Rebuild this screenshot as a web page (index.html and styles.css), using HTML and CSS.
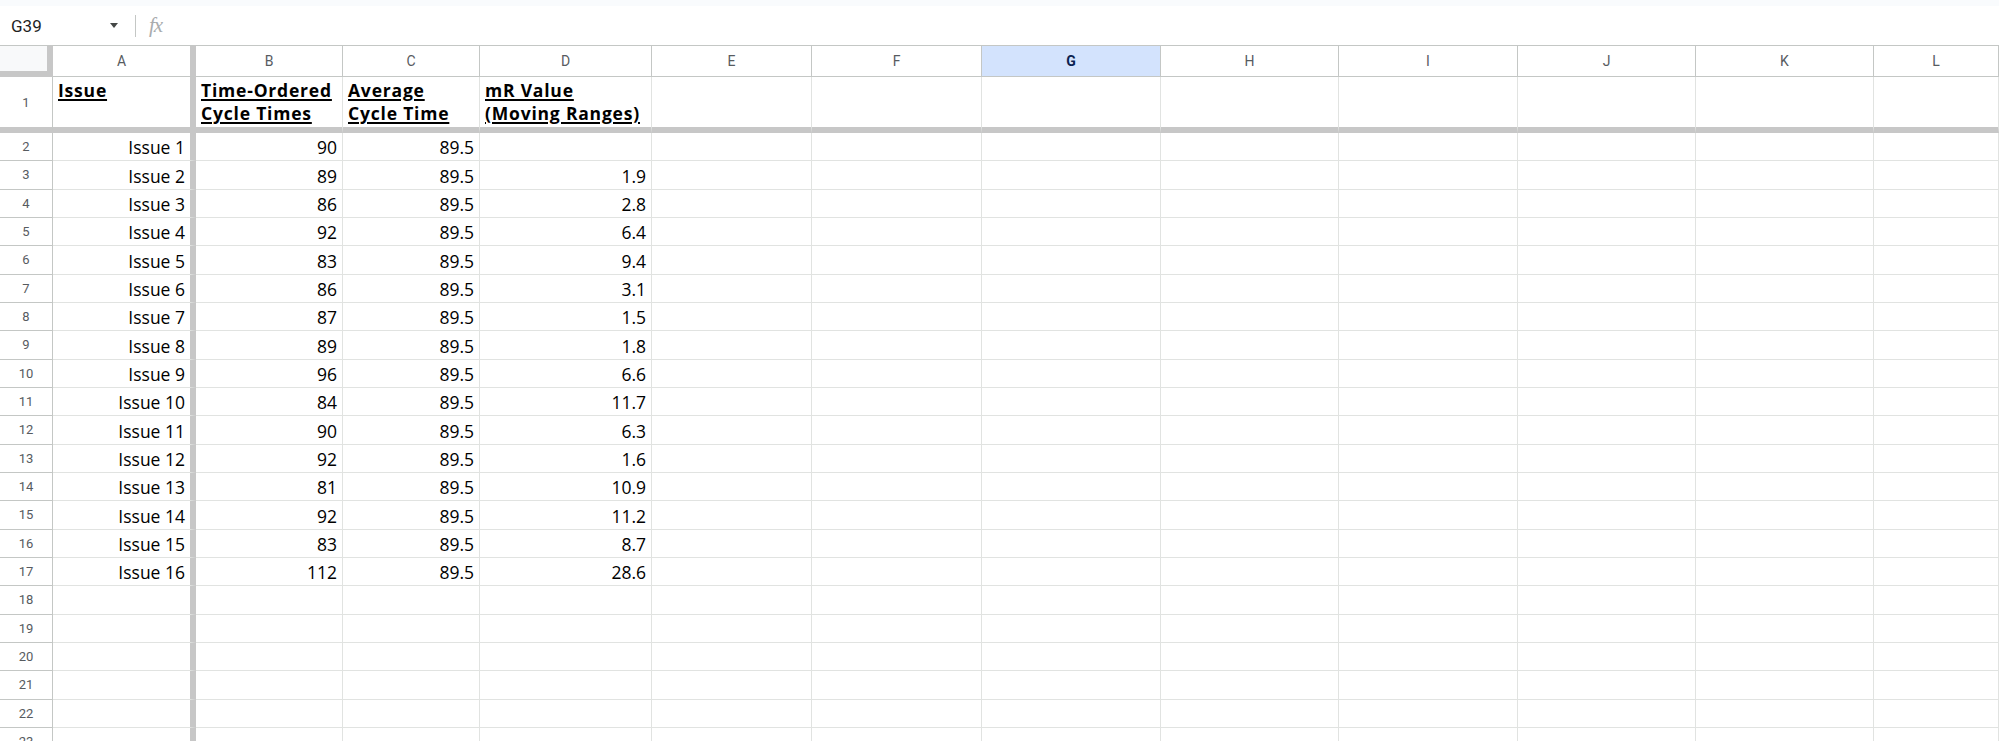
FILE: index.html
```html
<!DOCTYPE html>
<html lang="en">
<head>
    <meta charset="UTF-8">
    <meta name="viewport" content="width=device-width, initial-scale=1.0">
    <title>Cycle Times</title>
    <link rel="stylesheet" href="styles.css">
</head>
<body>
    <div class="topstrip"></div>
    <div class="formula-bar">
      <div class="name-box">G39</div>
      <span class="caret"></span>
      <span class="divider"></span>
      <span class="fx">fx</span>
    </div>

    <div class="sheet">
      <div class="row head-row">
        <div class="corner"></div>
        <div class="ch a">A</div>
        <div class="ch">B</div>
        <div class="ch">C</div>
        <div class="ch">D</div>
        <div class="ch">E</div>
        <div class="ch">F</div>
        <div class="ch sel">G</div>
        <div class="ch">H</div>
        <div class="ch">I</div>
        <div class="ch">J</div>
        <div class="ch">K</div>
        <div class="ch">L</div>
      </div>

      <div class="row row1">
        <div class="rh">1</div>
        <div class="c a hd"><span>Issue</span></div>
        <div class="c hd"><span>Time-Ordered<br>Cycle Times</span></div>
        <div class="c hd"><span>Average<br>Cycle Time</span></div>
        <div class="c hd"><span>mR Value<br>(Moving Ranges)</span></div>
        <div class="c"></div><div class="c"></div><div class="c"></div><div class="c"></div>
        <div class="c"></div><div class="c"></div><div class="c"></div><div class="c"></div>
      </div>

      <div class="row">
        <div class="rh">2</div>
        <div class="c a">Issue 1</div><div class="c">90</div><div class="c">89.5</div><div class="c"></div>
        <div class="c"></div><div class="c"></div><div class="c"></div><div class="c"></div>
        <div class="c"></div><div class="c"></div><div class="c"></div><div class="c"></div>
      </div>
      <div class="row">
        <div class="rh">3</div>
        <div class="c a">Issue 2</div><div class="c">89</div><div class="c">89.5</div><div class="c">1.9</div>
        <div class="c"></div><div class="c"></div><div class="c"></div><div class="c"></div>
        <div class="c"></div><div class="c"></div><div class="c"></div><div class="c"></div>
      </div>
      <div class="row">
        <div class="rh">4</div>
        <div class="c a">Issue 3</div><div class="c">86</div><div class="c">89.5</div><div class="c">2.8</div>
        <div class="c"></div><div class="c"></div><div class="c"></div><div class="c"></div>
        <div class="c"></div><div class="c"></div><div class="c"></div><div class="c"></div>
      </div>
      <div class="row">
        <div class="rh">5</div>
        <div class="c a">Issue 4</div><div class="c">92</div><div class="c">89.5</div><div class="c">6.4</div>
        <div class="c"></div><div class="c"></div><div class="c"></div><div class="c"></div>
        <div class="c"></div><div class="c"></div><div class="c"></div><div class="c"></div>
      </div>
      <div class="row">
        <div class="rh">6</div>
        <div class="c a">Issue 5</div><div class="c">83</div><div class="c">89.5</div><div class="c">9.4</div>
        <div class="c"></div><div class="c"></div><div class="c"></div><div class="c"></div>
        <div class="c"></div><div class="c"></div><div class="c"></div><div class="c"></div>
      </div>
      <div class="row">
        <div class="rh">7</div>
        <div class="c a">Issue 6</div><div class="c">86</div><div class="c">89.5</div><div class="c">3.1</div>
        <div class="c"></div><div class="c"></div><div class="c"></div><div class="c"></div>
        <div class="c"></div><div class="c"></div><div class="c"></div><div class="c"></div>
      </div>
      <div class="row">
        <div class="rh">8</div>
        <div class="c a">Issue 7</div><div class="c">87</div><div class="c">89.5</div><div class="c">1.5</div>
        <div class="c"></div><div class="c"></div><div class="c"></div><div class="c"></div>
        <div class="c"></div><div class="c"></div><div class="c"></div><div class="c"></div>
      </div>
      <div class="row">
        <div class="rh">9</div>
        <div class="c a">Issue 8</div><div class="c">89</div><div class="c">89.5</div><div class="c">1.8</div>
        <div class="c"></div><div class="c"></div><div class="c"></div><div class="c"></div>
        <div class="c"></div><div class="c"></div><div class="c"></div><div class="c"></div>
      </div>
      <div class="row">
        <div class="rh">10</div>
        <div class="c a">Issue 9</div><div class="c">96</div><div class="c">89.5</div><div class="c">6.6</div>
        <div class="c"></div><div class="c"></div><div class="c"></div><div class="c"></div>
        <div class="c"></div><div class="c"></div><div class="c"></div><div class="c"></div>
      </div>
      <div class="row">
        <div class="rh">11</div>
        <div class="c a">Issue 10</div><div class="c">84</div><div class="c">89.5</div><div class="c">11.7</div>
        <div class="c"></div><div class="c"></div><div class="c"></div><div class="c"></div>
        <div class="c"></div><div class="c"></div><div class="c"></div><div class="c"></div>
      </div>
      <div class="row">
        <div class="rh">12</div>
        <div class="c a">Issue 11</div><div class="c">90</div><div class="c">89.5</div><div class="c">6.3</div>
        <div class="c"></div><div class="c"></div><div class="c"></div><div class="c"></div>
        <div class="c"></div><div class="c"></div><div class="c"></div><div class="c"></div>
      </div>
      <div class="row">
        <div class="rh">13</div>
        <div class="c a">Issue 12</div><div class="c">92</div><div class="c">89.5</div><div class="c">1.6</div>
        <div class="c"></div><div class="c"></div><div class="c"></div><div class="c"></div>
        <div class="c"></div><div class="c"></div><div class="c"></div><div class="c"></div>
      </div>
      <div class="row">
        <div class="rh">14</div>
        <div class="c a">Issue 13</div><div class="c">81</div><div class="c">89.5</div><div class="c">10.9</div>
        <div class="c"></div><div class="c"></div><div class="c"></div><div class="c"></div>
        <div class="c"></div><div class="c"></div><div class="c"></div><div class="c"></div>
      </div>
      <div class="row">
        <div class="rh">15</div>
        <div class="c a">Issue 14</div><div class="c">92</div><div class="c">89.5</div><div class="c">11.2</div>
        <div class="c"></div><div class="c"></div><div class="c"></div><div class="c"></div>
        <div class="c"></div><div class="c"></div><div class="c"></div><div class="c"></div>
      </div>
      <div class="row">
        <div class="rh">16</div>
        <div class="c a">Issue 15</div><div class="c">83</div><div class="c">89.5</div><div class="c">8.7</div>
        <div class="c"></div><div class="c"></div><div class="c"></div><div class="c"></div>
        <div class="c"></div><div class="c"></div><div class="c"></div><div class="c"></div>
      </div>
      <div class="row">
        <div class="rh">17</div>
        <div class="c a">Issue 16</div><div class="c">112</div><div class="c">89.5</div><div class="c">28.6</div>
        <div class="c"></div><div class="c"></div><div class="c"></div><div class="c"></div>
        <div class="c"></div><div class="c"></div><div class="c"></div><div class="c"></div>
      </div>
      <div class="row">
        <div class="rh">18</div>
        <div class="c a"></div><div class="c"></div><div class="c"></div><div class="c"></div>
        <div class="c"></div><div class="c"></div><div class="c"></div><div class="c"></div>
        <div class="c"></div><div class="c"></div><div class="c"></div><div class="c"></div>
      </div>
      <div class="row">
        <div class="rh">19</div>
        <div class="c a"></div><div class="c"></div><div class="c"></div><div class="c"></div>
        <div class="c"></div><div class="c"></div><div class="c"></div><div class="c"></div>
        <div class="c"></div><div class="c"></div><div class="c"></div><div class="c"></div>
      </div>
      <div class="row">
        <div class="rh">20</div>
        <div class="c a"></div><div class="c"></div><div class="c"></div><div class="c"></div>
        <div class="c"></div><div class="c"></div><div class="c"></div><div class="c"></div>
        <div class="c"></div><div class="c"></div><div class="c"></div><div class="c"></div>
      </div>
      <div class="row">
        <div class="rh">21</div>
        <div class="c a"></div><div class="c"></div><div class="c"></div><div class="c"></div>
        <div class="c"></div><div class="c"></div><div class="c"></div><div class="c"></div>
        <div class="c"></div><div class="c"></div><div class="c"></div><div class="c"></div>
      </div>
      <div class="row">
        <div class="rh">22</div>
        <div class="c a"></div><div class="c"></div><div class="c"></div><div class="c"></div>
        <div class="c"></div><div class="c"></div><div class="c"></div><div class="c"></div>
        <div class="c"></div><div class="c"></div><div class="c"></div><div class="c"></div>
      </div>
      <div class="row">
        <div class="rh">23</div>
        <div class="c a"></div><div class="c"></div><div class="c"></div><div class="c"></div>
        <div class="c"></div><div class="c"></div><div class="c"></div><div class="c"></div>
        <div class="c"></div><div class="c"></div><div class="c"></div><div class="c"></div>
      </div>
    </div>
</body>
</html>
```

FILE: styles.css
```css
* {
    box-sizing: border-box;
  }

  body {
    margin: 0;
    height: 741px;
    overflow: hidden;
    background-color: #fff;
    font-family: "Open Sans", sans-serif;
    color: #000;
  }

  .topstrip {
    height: 6px;
    background-color: #f9fbfd;
  }

  .formula-bar {
    height: 39px;
    display: flex;
    align-items: center;
    padding-left: 11px;
  }

  .name-box {
    width: 99px;
    font-family: Roboto, sans-serif;
    font-size: 17px;
    color: #1f1f1f;
  }

  .caret {
    width: 0;
    height: 0;
    border-left: 4px solid transparent;
    border-right: 4px solid transparent;
    border-top: 5px solid #444746;
    margin-right: 17px;
  }

  .divider {
    width: 1px;
    height: 22px;
    background-color: #c4c7c5;
    margin-right: 13px;
  }

  .fx {
    font-family: "Liberation Serif", serif;
    font-style: italic;
    font-size: 21px;
    color: #a9acae;
    letter-spacing: -1px;
  }

  /* sheet grid */
  .row {
    display: grid;
    grid-template-columns: 53px 143px 147px 137px 172px 160px 170px 179px 178px 179px 178px 178px 1fr;
    height: 28.33px;
  }

  .head-row {
    height: 32px;
  }

  .row1 {
    height: 56px;
  }

  .corner {
    background-color: #f8f9fa;
    border-top: 1px solid #c4c7c5;
    border-right: 6px solid #c7c7c7;
    border-bottom: 6px solid #c7c7c7;
  }

  .ch {
    display: flex;
    align-items: center;
    justify-content: center;
    border-top: 1px solid #c4c7c5;
    border-right: 1px solid #c4c7c5;
    border-bottom: 1px solid #c4c7c5;
    font-family: Roboto, sans-serif;
    font-size: 14px;
    color: #575b5f;
  }

  .ch.sel {
    background-color: #d3e3fd;
    color: #0b2350;
    font-weight: 700;
  }

  .rh {
    display: flex;
    align-items: center;
    justify-content: center;
    border-right: 1px solid #c4c7c5;
    border-bottom: 1px solid #c4c7c5;
    font-family: Roboto, sans-serif;
    font-size: 13px;
    color: #575b5f;
  }

  .c {
    display: flex;
    align-items: flex-end;
    justify-content: flex-end;
    border-right: 1px solid #e1e3e1;
    border-bottom: 1px solid #e1e3e1;
    padding: 0 5px 3px 4px;
    font-size: 17.5px;
    line-height: 20px;
    white-space: nowrap;
    overflow: hidden;
  }

  .ch.a,
  .c.a {
    border-right: 6px solid #c7c7c7;
  }

  .row1 > div {
    border-bottom: 6px solid #c7c7c7;
  }

  .c.hd {
    align-items: flex-start;
    justify-content: flex-start;
    padding: 2px 2px 0 5px;
    line-height: 23px;
    font-weight: 700;
    letter-spacing: 0.8px;
  }

  .hd span {
    text-decoration: underline;
    text-decoration-thickness: 1.5px;
    text-underline-offset: 2px;
  }
```
